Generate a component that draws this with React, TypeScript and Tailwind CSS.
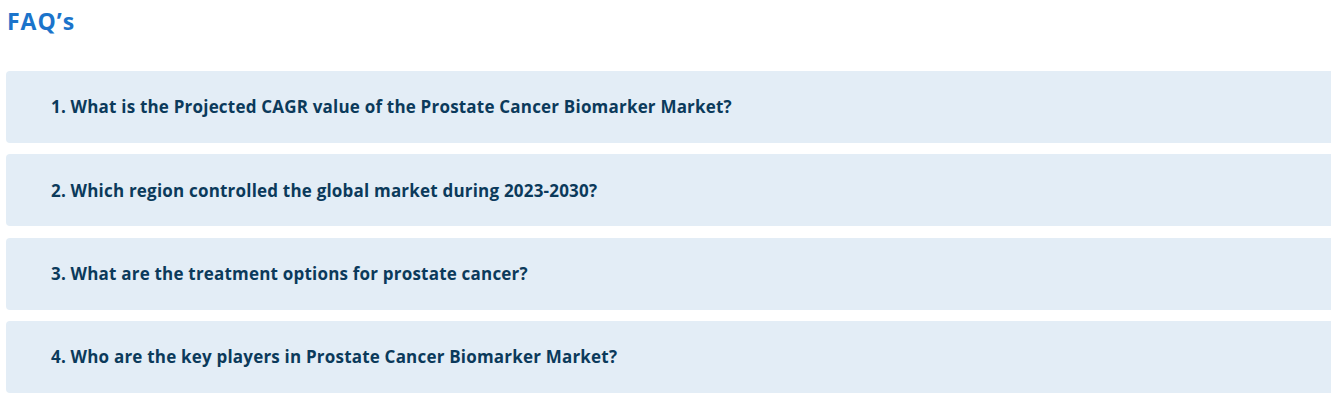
import React from 'react';

const FAQS = [
  '1. What is the Projected CAGR value of the Prostate Cancer Biomarker Market?',
  '2. Which region controlled the global market during 2023-2030?',
  '3. What are the treatment options for prostate cancer?',
  '4. Who are the key players in Prostate Cancer Biomarker Market?',
];

const App: React.FC = () => {
  return (
    <div className="w-[1331px] h-[397px] overflow-hidden bg-white font-['Open_Sans',sans-serif]">
      <h2 className="pl-[7px] pt-[6px] text-[23px] leading-[30px] tracking-[1px] font-bold text-[#1b74cb]">FAQ’s</h2>
      <div className="mt-[35px] ml-[6px] mr-[-20px] flex flex-col gap-[11.33px]">
        {FAQS.map(q => (
          <div key={q} className="h-[72px] rounded-l-[4px] bg-[#e3edf6] flex items-center pl-[45px]">
            <span className="text-[17px] tracking-[0.2px] font-bold text-[#0b3a5b]">{q}</span>
          </div>
        ))}
      </div>
    </div>
  );
};

export default App;
